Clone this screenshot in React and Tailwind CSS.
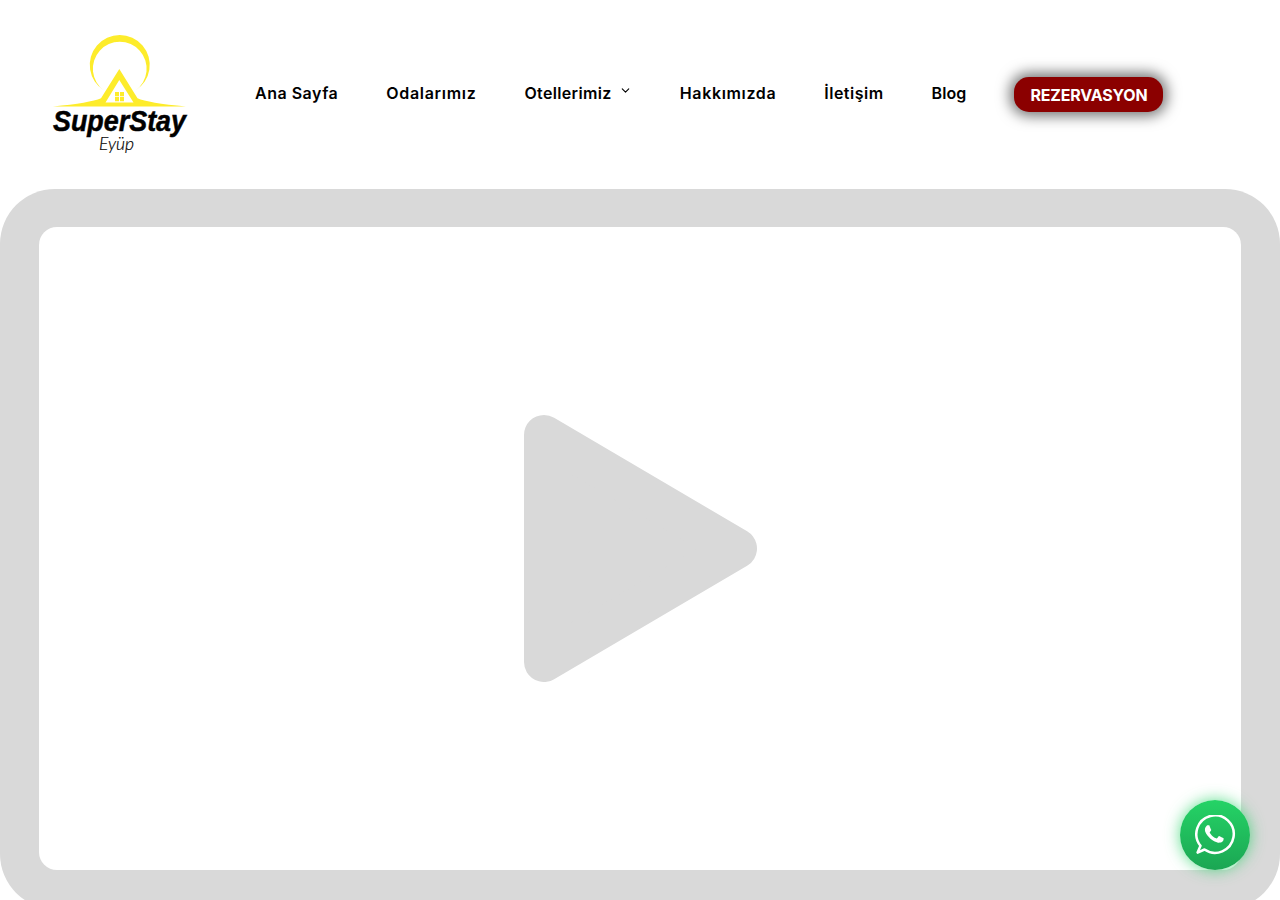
import React from "react";
import { ChevronDown } from "lucide-react";

const links = [
  { label: "Ana Sayfa", track: "tracking-[0.5px]" },
  { label: "Odalarımız", track: "tracking-[0.7px]" },
  { label: "Otellerimiz", track: "tracking-[0.35px]" },
  { label: "Hakkımızda", track: "tracking-[0.65px]" },
  { label: "İletişim", track: "tracking-[0.5px]" },
  { label: "Blog", track: "tracking-[0.1px]" },
];

function Logo() {
  return (
    <svg width="135" height="120" viewBox="52 35 135 120" className="shrink-0 overflow-visible">
      <path d="M104 90.5 A30 30 0 1 1 135.5 90.5 A26.9 26.9 0 1 0 104 90.5 Z" fill="#fdec2b" />
      <path
        fillRule="evenodd"
        d="M119.3 69 L137.5 98.3 Q148 103 186 106.5 L53 106.5 Q90 103 101 98.3 Z M119.3 80 L105.5 102.5 L133.5 102.5 Z"
        fill="#fdec2b"
      />
      <path d="M115 92h4v4.3h-4z M120 92h4v4.3h-4z M115 97h4v4.3h-4z M120 97h4v4.3h-4z" fill="#fdec2b" />
      <text x="53" y="130.5" textLength="133" lengthAdjust="spacingAndGlyphs" stroke="#000" strokeWidth="0.5" className="font-['Liberation_Sans',sans-serif] text-[29px] font-bold italic" fill="#000">
        SuperStay
      </text>
      <text x="99" y="150" textLength="35" lengthAdjust="spacingAndGlyphs" stroke="#000" strokeWidth="0.2" className="font-['Lato',sans-serif] text-[17px] font-light italic" fill="#000">
        Eyüp
      </text>
    </svg>
  );
}

function WhatsappIcon() {
  return (
    <svg width="41" height="41" viewBox="0 0 41 41" fill="none">
      <path d="M2.6 37.6 L5.5 30.8 A18.7 18.7 0 1 1 9.5 34.5 Z" stroke="#fff" strokeWidth="2.5" strokeLinejoin="round" />
      <g transform="translate(0.6 0.4) scale(1.55)">
        <path
          fill="#fff"
          d="M17.472 14.382c-.297-.149-1.758-.867-2.03-.967-.273-.099-.471-.148-.67.15-.197.297-.767.966-.94 1.164-.173.199-.347.223-.644.075-.297-.15-1.255-.463-2.39-1.475-.883-.788-1.48-1.761-1.653-2.059-.173-.297-.018-.458.13-.606.134-.133.298-.347.446-.52.149-.174.198-.298.298-.497.099-.198.05-.371-.025-.52-.075-.149-.669-1.612-.916-2.207-.242-.579-.487-.5-.669-.51-.173-.008-.371-.01-.57-.01-.198 0-.52.074-.792.372-.272.297-1.04 1.016-1.04 2.479 0 1.462 1.065 2.875 1.213 3.074.149.198 2.096 3.2 5.077 4.487.709.306 1.262.489 1.694.625.712.227 1.36.195 1.871.118.571-.085 1.758-.719 2.006-1.413.248-.694.248-1.289.173-1.413-.074-.124-.272-.198-.57-.347z"
        />
      </g>
    </svg>
  );
}

export default function App() {
  return (
    <div className="h-screen overflow-hidden bg-white font-['Inter',sans-serif]">
      <header className="flex h-[189px] items-center pl-[52px]">
        <Logo />
        <nav className="ml-[68px] flex items-center gap-12 text-base font-semibold leading-6 text-black">
          {links.map((l) => (
            <a key={l.label} href="#" className={`flex items-center pb-1 ${l.track}`}>
              {l.label}
              {l.label === "Otellerimiz" && <ChevronDown size={13} strokeWidth={2} className="mb-1 ml-[7px]" />}
            </a>
          ))}
          <a
            href="#"
            className="flex h-[35px] items-center rounded-[15px] bg-[#8b0000] px-4 text-base font-bold tracking-[-0.2px] text-white shadow-[0_0_14px_4px_rgba(0,0,0,0.55)]"
          >
            REZERVASYON
          </a>
        </nav>
      </header>

      <main className="h-[720px] rounded-[55px] bg-[#d9d9d9] pb-[39px] pl-[39px] pr-[39px] pt-[38px]">
        <div className="flex h-full items-center justify-center rounded-[18px] bg-white">
          <svg width="233" height="267" viewBox="0 0 233 267">
            <polygon points="20,20 213,133.5 20,247" fill="#d9d9d9" stroke="#d9d9d9" strokeWidth="40" strokeLinejoin="round" />
          </svg>
        </div>
      </main>

      <a
        href="#"
        className="fixed bottom-[30px] right-[30px] flex h-[70px] w-[70px] items-center justify-center rounded-full bg-gradient-to-b from-[#25d366] to-[#1ba653] shadow-[0_0_15px_rgba(37,211,102,0.75)]"
      >
        <WhatsappIcon />
      </a>
    </div>
  );
}
